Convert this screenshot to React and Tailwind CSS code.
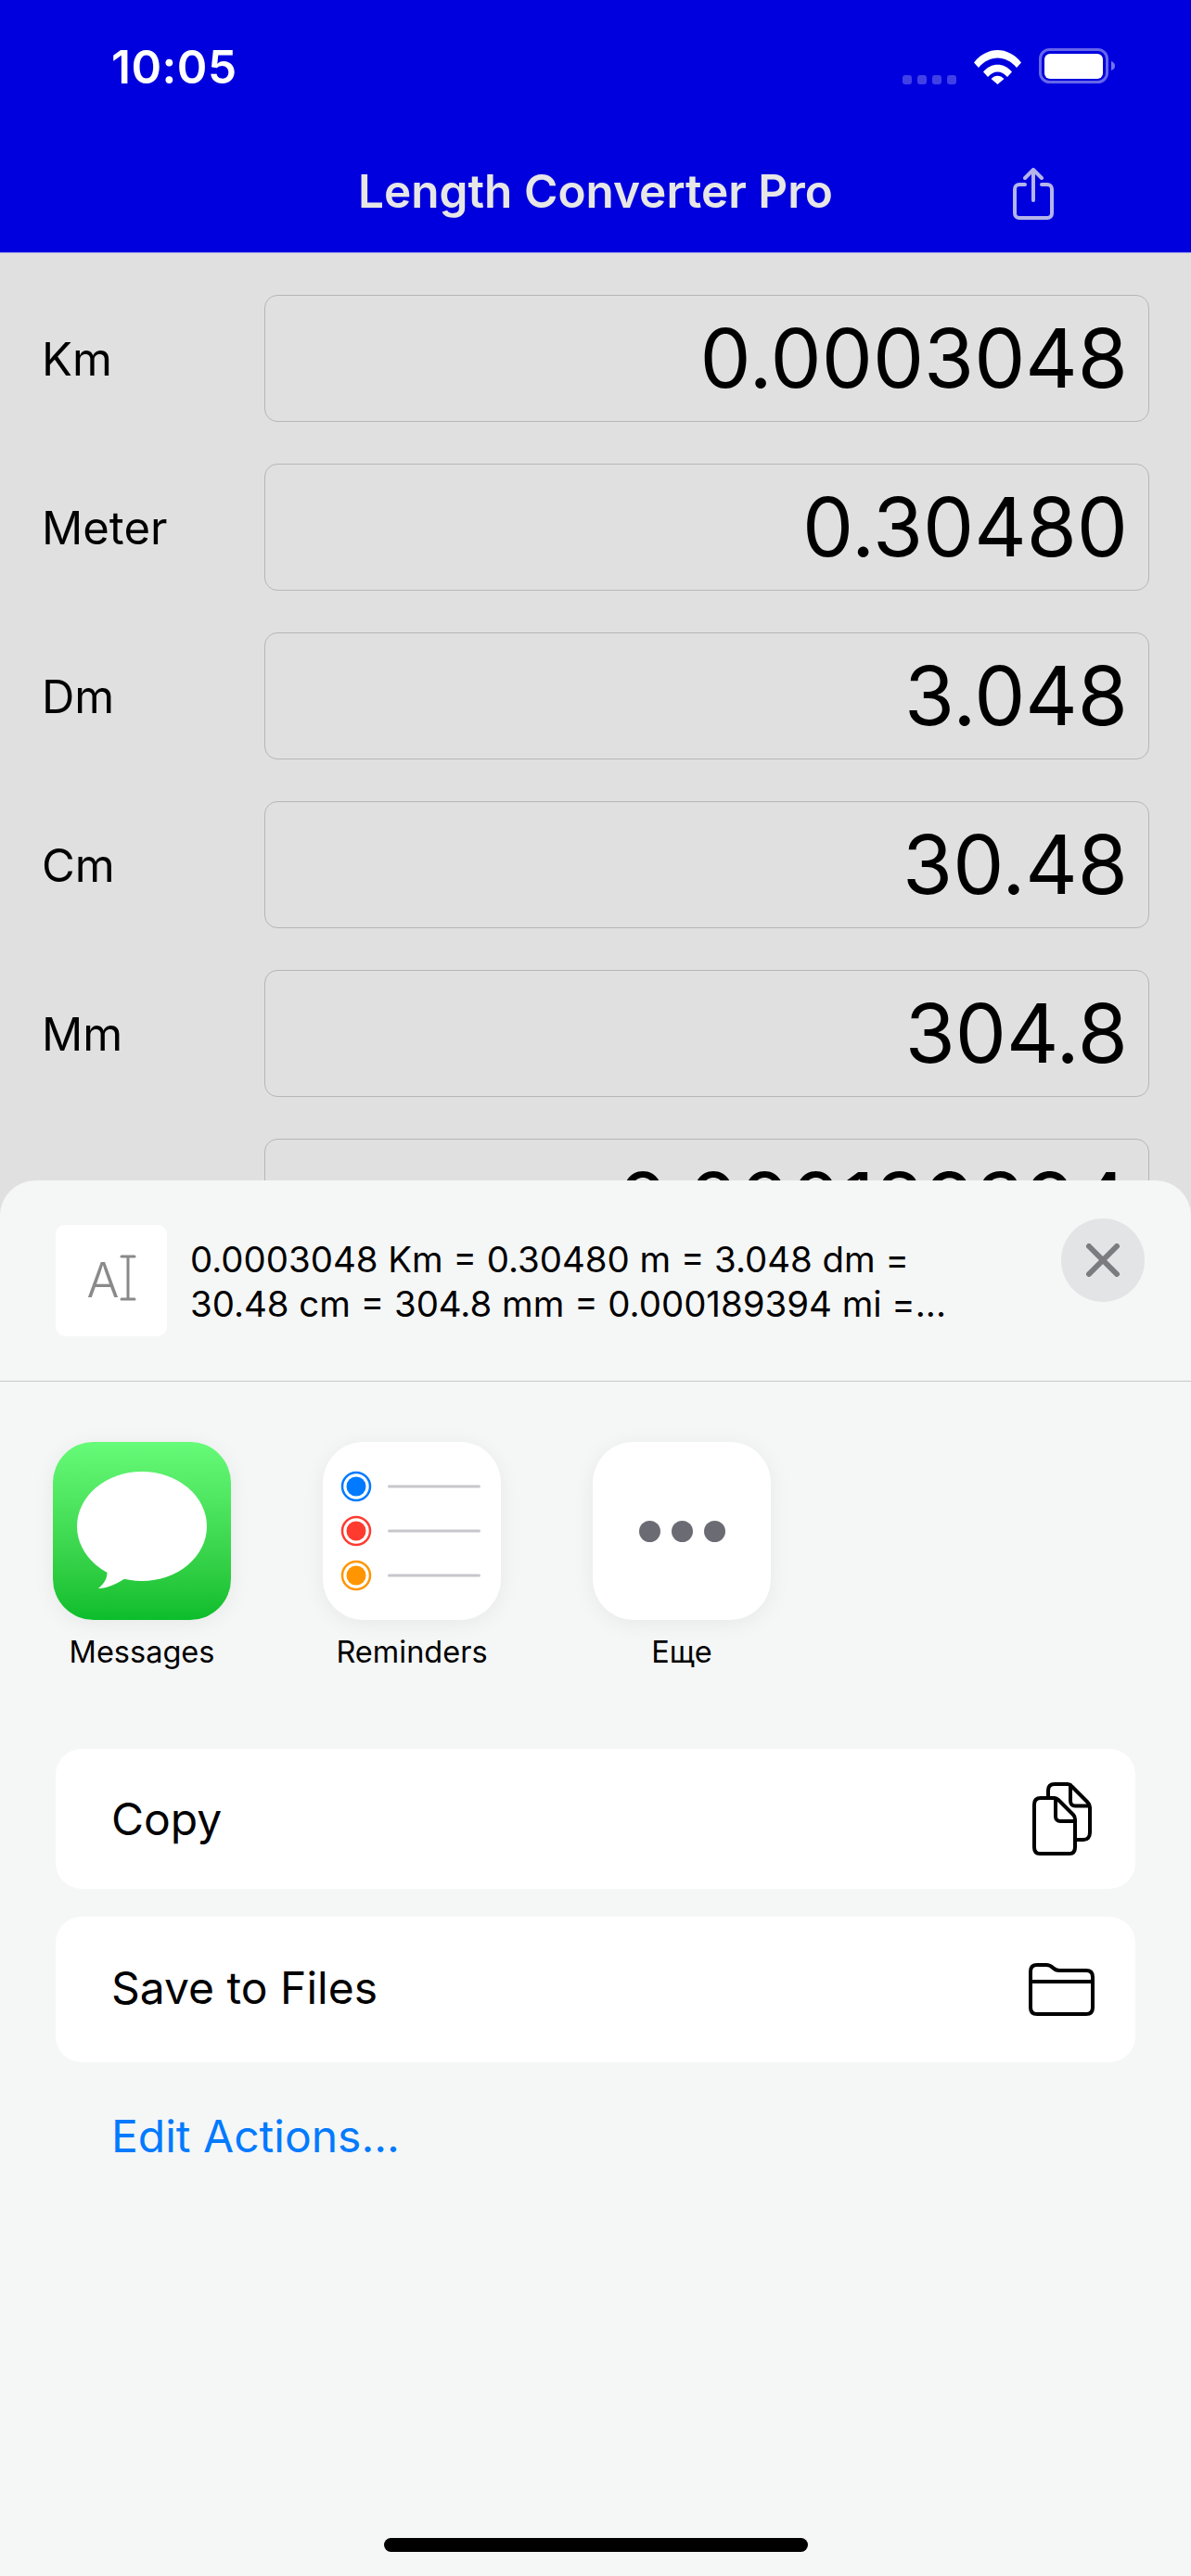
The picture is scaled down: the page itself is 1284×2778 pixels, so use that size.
import React from 'react';

const font = { fontFamily: 'Inter, "Noto Sans", sans-serif' };

const rows = [
  ['Km', '0.0003048'],
  ['Meter', '0.30480'],
  ['Dm', '3.048'],
  ['Cm', '30.48'],
  ['Mm', '304.8'],
  ['', '0.000189394'],
];

const StatusIcons = () => (
  <div className="flex items-start">
    <div className="flex gap-[6px] mt-[29px] mr-[19px]">
      <span className="w-[10px] h-[10px] rounded-[3px] bg-white/25" />
      <span className="w-[10px] h-[10px] rounded-[3px] bg-white/25" />
      <span className="w-[10px] h-[10px] rounded-[3px] bg-white/25" />
      <span className="w-[10px] h-[10px] rounded-[3px] bg-white/25" />
    </div>
    <svg width="51" height="38" viewBox="0 0 51 38" fill="white" className="mr-[19px] mt-[1px]">
      <path d="M0 14.5 C14 -3.5 37 -3.5 51 14.5 L46 20 C34.5 6 16.5 6 5 20 Z" />
      <path d="M10 24.5 C18.5 14 32.5 14 41 24.5 L36 30 C30 22.5 21 22.5 15 30 Z" />
      <path d="M18.5 32 C22.5 27.5 28.5 27.5 32.5 32 L25.5 38 Z" />
    </svg>
    <svg width="82" height="40" viewBox="0 0 82 40" fill="none">
      <rect x="1.5" y="1.5" width="72" height="35" rx="10" stroke="white" strokeOpacity="0.4" strokeWidth="3" />
      <rect x="6" y="6" width="63" height="27" rx="6" fill="white" />
      <path d="M78 14 C81 15 82 17 82 19 C82 21 81 23 78 24 Z" fill="white" fillOpacity="0.45" />
    </svg>
  </div>
);

const ShareIcon = () => (
  <svg width="44" height="56" viewBox="0 0 44 56" fill="none" stroke="#b4b4ea" strokeWidth="4" strokeLinecap="round" strokeLinejoin="round">
    <path d="M13 18 H7 C4 18 2 20 2 23 V49 C2 52 4 54 7 54 H37 C40 54 42 52 42 49 V23 C42 20 40 18 37 18 H31" />
    <path d="M22 35 V3" />
    <path d="M13 11 L22 2 L31 11" />
  </svg>
);

const MessagesIcon = () => (
  <div className="w-[192px] h-[192px] rounded-[44px] bg-gradient-to-b from-[#66fb78] to-[#0abd2b] shadow-[0_4px_24px_rgba(0,0,0,0.06)]">
    <svg width="192" height="192" viewBox="0 0 192 192">
      <ellipse cx="96" cy="91" rx="70" ry="59" fill="white" />
      <path d="M58 136 C60 146 56 152 49 158 C60 158 70 152 80 146 Z" fill="white" />
    </svg>
  </div>
);

const RemindersIcon = () => (
  <div className="w-[192px] h-[192px] rounded-[44px] bg-white shadow-[0_4px_24px_rgba(0,0,0,0.06)]">
    <svg width="192" height="192" viewBox="0 0 192 192">
      {[[48, '#007aff'], [96, '#ff3b30'], [144, '#ff9500']].map(([y, c]) => (
        <g key={y}>
          <circle cx="36" cy={y} r="15" fill="none" stroke={c} strokeWidth="2.5" />
          <circle cx="36" cy={y} r="10.5" fill={c} />
          <rect x="70" y={y - 1.5} width="100" height="3" rx="1.5" fill="#c7c7cc" />
        </g>
      ))}
    </svg>
  </div>
);

const MoreIcon = () => (
  <div className="w-[192px] h-[192px] rounded-[44px] bg-white shadow-[0_4px_24px_rgba(0,0,0,0.06)] flex items-center justify-center gap-[12px]">
    <span className="w-[23px] h-[23px] rounded-full bg-[#6b6b73]" />
    <span className="w-[23px] h-[23px] rounded-full bg-[#6b6b73]" />
    <span className="w-[23px] h-[23px] rounded-full bg-[#6b6b73]" />
  </div>
);

const CopyIcon = () => (
  <svg width="64" height="79" viewBox="0 0 64 79" fill="none" stroke="black" strokeWidth="4" strokeLinejoin="round" strokeLinecap="round">
    <path d="M9 17 H24 C26 17 27 18 28 19 L44 35 C45.5 36.5 46 38 46 40 V70 C46 74.500 44 77 40 77 H8 C4 77 2 74.500 2 70 V24 C2 19.500 4 17 9 17 Z" />
    <path d="M25 18 V37 C25 40 27 42 30 42 H45" />
    <path d="M17 16 V9 C17 4.500 19.500 2 24 2 H38 C40 2 41 3 42.500 4.500 L59 21 C61 23 62 24.500 62 27 V54 C62 59 59.500 62 55 62 H47" />
    <path d="M41 3 V20 C41 23.500 43 25.500 46 25.500 H61" />
  </svg>
);

const FolderIcon = () => (
  <svg width="71" height="57" viewBox="0 0 71 57" fill="none" stroke="black" strokeWidth="4" strokeLinejoin="round">
    <path d="M2 9 C2 4.500 4.500 2 9 2 H19 C22 2 24 3 26 5 C28 7 30 8 33 8 H62 C66.500 8 69 10.500 69 15 V48 C69 52.500 66.500 55 62 55 H9 C4.500 55 2 52.500 2 48 Z" />
    <path d="M2 20 H69" />
  </svg>
);

const ActionRow = ({ label, h, icon, pr, textClass }) => (
  <div className={`bg-white rounded-[28px] flex items-center justify-between pl-[60px] ${h} ${pr}`}>
    <span className={`text-[48px] leading-[56px] text-black ${textClass}`}>{label}</span>
    {icon}
  </div>
);

export default function App() {
  return (
    <div style={font} className="flex flex-col w-[1284px] h-[2778px] overflow-hidden bg-[#e0e0e0]">
      {/* Header */}
      <header className="h-[273px] shrink-0 bg-[#0000de] border-b border-[#9c9cec]">
        <div className="h-[144px] flex items-start justify-between pl-[120px] pr-[82px] pt-[52px]">
          <span className="text-[49.500px] leading-[40px] font-semibold text-white tracking-[0.5px]">10:05</span>
          <StatusIcons />
        </div>
        <div className="grid grid-cols-[1fr_auto_1fr] items-center h-[128px] pr-[148px]">
          <span />
          <h1 className="text-[49.500px] font-semibold text-[#e6e6e6] leading-none pl-[148px] -mt-[3px]">Length Converter Pro</h1>
          <div className="justify-self-end mt-[2px]"><ShareIcon /></div>
        </div>
      </header>

      {/* Converter rows, the sheet cuts them off */}
      <div className="h-[1000px] shrink-0 overflow-hidden flex flex-col gap-[45px] pt-[45px] pl-[45px] pr-[45px]">
        {rows.map(([label, value]) => (
          <div key={value} className="flex items-center shrink-0">
            <span className="w-[240px] text-[49px] text-black pt-[3px]">{label}</span>
            <div className="w-[954px] h-[137px] rounded-[14px] border-[1.5px] border-[#b6b6b6] flex items-center justify-end pr-[22px]">
              <span className="text-[87.500px] text-black leading-none">{value}</span>
            </div>
          </div>
        ))}
      </div>

      {/* Share sheet */}
      <div className="flex-1 relative bg-[#f5f6f6] rounded-t-[38px]">
        <div className="h-[217px] border-b-[1.5px] border-[#c8c8c8] flex items-start pl-[60px] pr-[50px] pt-[41px]">
          <div className="w-[120px] h-[120px] mt-[7px] rounded-[10px] bg-white flex items-center justify-center text-[#8a8a8a] shrink-0">
            <span className="text-[52px] font-light leading-none">A</span>
            <svg width="18" height="50" viewBox="0 0 18 50" fill="none" stroke="#8a8a8a" strokeWidth="3" strokeLinecap="round" className="-mt-[6px]">
              <path d="M2 2 H16 M9 2 V48 M2 48 H16" />
            </svg>
          </div>
          <p className="ml-[25px] mt-[20px] text-[38.400px] leading-[48px] text-black whitespace-nowrap">
            0.0003048 Km = 0.30480 m = 3.048 dm =<br />
            30.48 cm = 304.8 mm = 0.000189394 mi =...
          </p>
          <div className="ml-auto w-[90px] h-[90px] rounded-full bg-[#e3e4e6] flex items-center justify-center shrink-0">
            <svg width="38" height="36" viewBox="0 0 38 36" fill="none" stroke="#7b7b80" strokeWidth="6" strokeLinecap="round">
              <path d="M4 3 L34 33 M34 3 L4 33" />
            </svg>
          </div>
        </div>

        {/* App icons */}
        <div className="flex gap-[99px] pl-[57px] pt-[65px]">
          {[['Messages', <MessagesIcon />], ['Reminders', <RemindersIcon />], ['Еще', <MoreIcon />]].map(([label, icon]) => (
            <div key={label} className="w-[192px] flex flex-col items-center">
              {icon}
              <span className="mt-[17px] text-[32.500px] leading-[36px] text-black whitespace-nowrap">{label}</span>
            </div>
          ))}
        </div>

        {/* Actions */}
        <div className="flex flex-col gap-[30px] mx-[60px] mt-[86px]">
          <ActionRow label="Copy" h="h-[151px]" pr="pr-[47px]" icon={<CopyIcon />} textClass="" />
          <ActionRow label="Save to Files" h="h-[157px]" pr="pr-[44px]" icon={<FolderIcon />} textClass="-mt-[3px]" />
        </div>
        <div className="pl-[120px] mt-[56px] text-[48px] leading-[48px] text-[#007aff]">Edit Actions...</div>

        {/* Home indicator */}
        <div className="absolute bottom-[26px] left-[414px] w-[457px] h-[15px] rounded-full bg-black" />
      </div>
    </div>
  );
}
